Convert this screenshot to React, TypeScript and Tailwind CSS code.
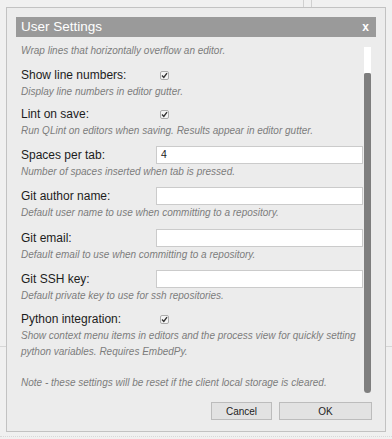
import type { ReactNode } from "react";

type Row =
  | { kind: "check"; label: string; desc: string[]; mt: string }
  | { kind: "text"; label: string; value: string; desc: string[]; mt: string };

const rows: Row[] = [
  { kind: "check", label: "Show line numbers:", desc: ["Display line numbers in editor gutter."], mt: "mt-[7px]" },
  {
    kind: "check",
    label: "Lint on save:",
    desc: ["Run QLint on editors when saving. Results appear in editor gutter."],
    mt: "mt-[5px]",
  },
  { kind: "text", label: "Spaces per tab:", value: "4", desc: ["Number of spaces inserted when tab is pressed."], mt: "mt-[7px]" },
  {
    kind: "text",
    label: "Git author name:",
    value: "",
    desc: ["Default user name to use when committing to a repository."],
    mt: "mt-[7px]",
  },
  { kind: "text", label: "Git email:", value: "", desc: ["Default email to use when committing to a repository."], mt: "mt-[8px]" },
  { kind: "text", label: "Git SSH key:", value: "", desc: ["Default private key to use for ssh repositories."], mt: "mt-[7px]" },
  {
    kind: "check",
    label: "Python integration:",
    desc: [
      "Show context menu items in editors and the process view for quickly setting",
      "python variables. Requires EmbedPy.",
    ],
    mt: "mt-[6px]",
  },
];

function Desc({ children }: { children: ReactNode }) {
  return <div className="text-[10px] leading-[16px] italic text-[#7c7c7c] whitespace-nowrap">{children}</div>;
}

function Check() {
  return (
    <span className="ml-[4px] flex h-[9px] w-[9px] items-center justify-center rounded-[2px] border border-[#ababab] bg-[#f4f4f4]">
      <svg width="7" height="7" viewBox="0 0 7 7">
        <path d="M1 3.6 L2.8 5.4 L6 1.2" fill="none" stroke="#333" strokeWidth="1.4" />
      </svg>
    </span>
  );
}

export default function App() {
  return (
    <div className="relative h-[439px] w-[392px] overflow-hidden bg-[#f0f0f0] font-['Liberation_Sans',Arial,sans-serif]">
      {/* page behind the modal */}
      <div className="flex h-[347px] border-b border-[#d6d6d6]">
        <div className="w-[303px]" />
        <div className="w-[9px] border-x border-[#d0d0d0]" />
      </div>
      <div className="mt-[89px] border-t border-dotted border-[#d8d8d8]" />

      {/* modal */}
      <div className="absolute left-[6px] top-[7px] flex h-[425px] w-[380px] flex-col border border-[#c2c2c2] bg-[#ececec] p-[9px]">
        <div className="flex h-[20px] items-center justify-between bg-[#9a9a9a] pl-[5px] pr-[7px] text-white">
          <span className="text-[13.5px]">User Settings</span>
          <span className="text-[12px] font-bold">x</span>
        </div>

        <div className="flex h-[358px]">
          <div className="flex-1 pl-[5px] pt-[6px]">
            <Desc>Wrap lines that horizontally overflow an editor.</Desc>
            {rows.map((r) => (
              <div key={r.label} className={r.mt}>
                <div className="flex h-[18px] items-center">
                  <span className="w-[135px] text-[12px] text-[#1c1c1c]">{r.label}</span>
                  {r.kind === "check" ? (
                    <Check />
                  ) : (
                    <div className="flex h-[18px] flex-1 items-center border border-[#cbcbcb] bg-white pl-[4px] text-[10.5px] text-[#222]">
                      {r.value}
                    </div>
                  )}
                </div>
                {r.desc.map((d) => (
                  <Desc key={d}>{d}</Desc>
                ))}
              </div>
            ))}
            <div className="mt-[15px]">
              <Desc>Note - these settings will be reset if the client local storage is cleared.</Desc>
            </div>
          </div>
          <div className="ml-[1px] mr-[5px] mt-[10px] flex h-[346px] w-[7px] flex-col">
            <div className="h-[26px] bg-white" />
            <div className="flex-1 rounded-b-[4px] rounded-t-[2px] bg-[#7e7e7e]" />
          </div>
        </div>

        <div className="mt-[7px] flex justify-end gap-[7px] pr-[4px]">
          <button className="h-[18px] w-[61px] border border-[#bcbcbc] bg-[#e2e2e2] text-[10px] text-[#222]">Cancel</button>
          <button className="h-[18px] w-[93px] border border-[#bcbcbc] bg-[#e2e2e2] text-[10px] text-[#222]">OK</button>
        </div>
      </div>
    </div>
  );
}
